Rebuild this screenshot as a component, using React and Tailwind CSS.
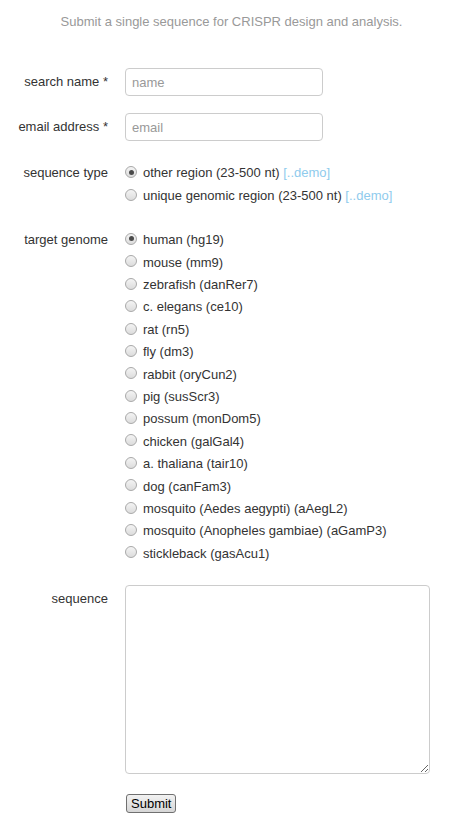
import React, { useState } from "react";

const genomes = [
  "human (hg19)",
  "mouse (mm9)",
  "zebrafish (danRer7)",
  "c. elegans (ce10)",
  "rat (rn5)",
  "fly (dm3)",
  "rabbit (oryCun2)",
  "pig (susScr3)",
  "possum (monDom5)",
  "chicken (galGal4)",
  "a. thaliana (tair10)",
  "dog (canFam3)",
  "mosquito (Aedes aegypti) (aAegL2)",
  "mosquito (Anopheles gambiae) (aGamP3)",
  "stickleback (gasAcu1)",
];

const Radio = ({ checked, label, demo, onClick }) => (
  <div className="flex items-center h-[22.4px] cursor-pointer" onClick={onClick}>
    <span className="w-[12px] h-[12px] rounded-full border border-[#a9a9a9] bg-gradient-to-b from-[#f4f4f4] to-[#dcdcdc] flex items-center justify-center mb-[2px]">
      {checked && <span className="w-[5px] h-[5px] rounded-full bg-[#4a4a4a]" />}
    </span>
    <span className="ml-[6px] text-[#333]">
      {label}
      {demo && <span className="text-[#8fcbed]"> [..demo]</span>}
    </span>
  </div>
);

const Label = ({ children, className = "" }) => (
  <div className={"w-[108px] shrink-0 text-right text-[#333] " + className}>{children}</div>
);

export default function App() {
  const [seqType, setSeqType] = useState(0);
  const [genome, setGenome] = useState(0);

  return (
    <div className="w-[451px] bg-white text-[13px] font-['Liberation_Sans',Arial,sans-serif]">
      <p className="pt-[13px] pl-[12px] text-center leading-[18px] text-[#999]">
        Submit a single sequence for CRISPR design and analysis.
      </p>

      <form className="mt-[37px] flex flex-col" onSubmit={(e) => e.preventDefault()}>
        <div className="flex items-center gap-[17px]">
          <Label className="leading-[28px]">search name *</Label>
          <input
            placeholder="name"
            className="w-[198px] h-[28px] rounded-[4px] border border-[#ccc] px-[6px] text-[#555] placeholder:text-[#999] outline-none"
          />
        </div>

        <div className="mt-[17px] flex items-center gap-[17px]">
          <Label className="leading-[28px]">email address *</Label>
          <input
            placeholder="email"
            className="w-[198px] h-[28px] rounded-[4px] border border-[#ccc] px-[6px] text-[#555] placeholder:text-[#999] outline-none"
          />
        </div>

        <div className="mt-[21px] flex items-start gap-[17px]">
          <Label className="leading-[22.4px]">sequence type</Label>
          <div className="flex flex-col">
            <Radio checked={seqType === 0} label="other region (23-500 nt)" demo onClick={() => setSeqType(0)} />
            <Radio checked={seqType === 1} label="unique genomic region (23-500 nt)" demo onClick={() => setSeqType(1)} />
          </div>
          </div>

        <div className="mt-[22px] flex items-start gap-[17px]">
          <Label className="leading-[22.4px]">target genome</Label>
          <div className="flex flex-col">
            {genomes.map((g, i) => (
              <Radio key={g} checked={genome === i} label={g} onClick={() => setGenome(i)} />
            ))}
          </div>
        </div>

        <div className="mt-[20px] flex items-start gap-[17px]">
          <Label className="leading-[28px]">sequence</Label>
          <textarea className="w-[305px] h-[189px] rounded-[4px] border border-[#ccc] outline-none p-[6px]" />
        </div>

        <div className="mt-[20px] pl-[126px] pb-[11px]">
          <button
            type="submit"
            className="h-[19px] px-[4px] leading-[15px] text-[13px] text-black rounded-[3px] border border-[#707070] bg-gradient-to-b from-[#f2f2f2] to-[#d6d6d6]"
          >
            Submit
          </button>
        </div>
      </form>
    </div>
  );
}
